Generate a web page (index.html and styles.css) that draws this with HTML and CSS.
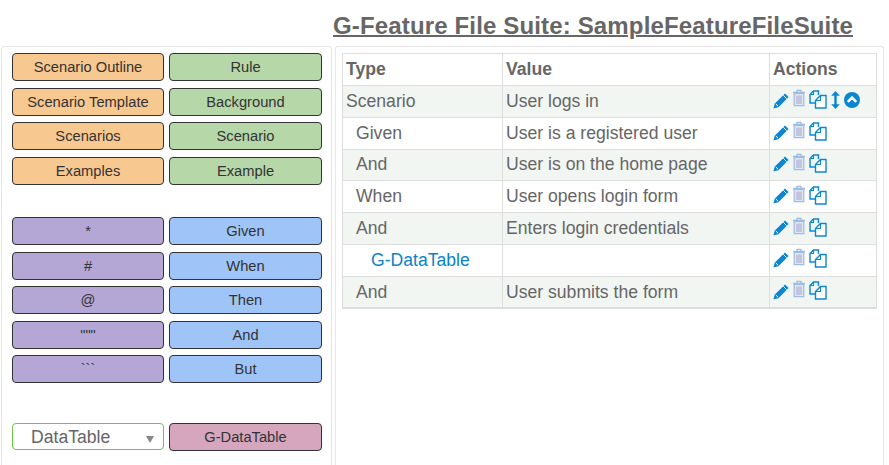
FILE: index.html

```html
<!DOCTYPE html>
<html lang="en">
<head>
  <meta charset="UTF-8">
  <meta name="viewport" content="width=device-width, initial-scale=1.0" />
  <title>G-Feature File Suite</title>
  <link rel="stylesheet" href="styles.css">
</head>
<body>
  <svg class="icon-defs" width="0" height="0">
    <symbol id="i-pencil" viewBox="0 0 16 16">
      <path d="M12 .4 15.6 4 5.4 14.2 .4 15.6 1.8 10.6Z" fill="currentColor"/>
      <path d="M10.3 2.3 13.7 5.7" stroke="#fff" stroke-width=".9"/>
      <path d="M2.8 11 5 13.2" stroke="#fff" stroke-width="1"/>
    </symbol>
    <symbol id="i-trash" viewBox="0 0 14 18">
      <path d="M1 3.5H13M5 3.3V1.3H9V3.3" fill="none" stroke="#9dbbe3" stroke-width="1.3"/>
      <path d="M2.2 4.5H11.8V16.6H2.2Z" fill="#dfe7f3" stroke="#9dbbe3" stroke-width="1.2"/>
      <path d="M5 6.5V15M7 6.5V15M9 6.5V15" stroke="#a9a2c4" stroke-width="1"/>
    </symbol>
    <symbol id="i-copy" viewBox="0 0 18 19">
      <path d="M9.5 5V1H4.5L1 4.5V13H6.5" fill="none" stroke="currentColor" stroke-width="1.4"/>
      <path d="M11.5 5.5H17V18H6.5V10.5Z" fill="#fff" stroke="currentColor" stroke-width="1.4"/>
      <path d="M4.5 1V4.5H1M11.5 5.5V10.5H6.5" fill="none" stroke="currentColor" stroke-width="1.1"/>
    </symbol>
    <symbol id="i-resize" viewBox="0 0 9 18">
      <path d="M4.5 0 8.8 4.8H5.7V13.2H8.8L4.5 18 .2 13.2H3.3V4.8H.2Z" fill="currentColor"/>
    </symbol>
    <symbol id="i-collapse" viewBox="0 0 16 16">
      <circle cx="8" cy="8" r="8" fill="currentColor"/>
      <path d="M3.8 9.9 8 5.7 12.2 9.9" fill="none" stroke="#fff" stroke-width="2.6"/>
    </symbol>
  </svg>

  <h1 class="title">G-Feature File Suite: SampleFeatureFileSuite</h1>

  <div class="workspace">
    <div class="panel palette">
      <div class="btn-grid">
        <button class="kw orange">Scenario Outline</button>
        <button class="kw green">Rule</button>
        <button class="kw orange">Scenario Template</button>
        <button class="kw green">Background</button>
        <button class="kw orange">Scenarios</button>
        <button class="kw green">Scenario</button>
        <button class="kw orange">Examples</button>
        <button class="kw green">Example</button>
      </div>
      <div class="btn-grid steps">
        <button class="kw purple">*</button>
        <button class="kw blue">Given</button>
        <button class="kw purple">#</button>
        <button class="kw blue">When</button>
        <button class="kw purple">@</button>
        <button class="kw blue">Then</button>
        <button class="kw purple">"""</button>
        <button class="kw blue">And</button>
        <button class="kw purple">```</button>
        <button class="kw blue">But</button>
      </div>
      <div class="btn-grid tables">
        <div class="fake-select">DataTable<span class="caret"></span></div>
        <button class="kw pink">G-DataTable</button>
      </div>
    </div>

    <div class="panel content">
      <table class="steps-table">
        <thead>
          <tr><th class="col-type">Type</th><th class="col-value">Value</th><th>Actions</th></tr>
        </thead>
        <tbody>
          <tr class="odd">
            <td>Scenario</td><td>User logs in</td>
            <td class="actions">
              <svg class="ic pencil"><use href="#i-pencil"/></svg><svg class="ic trash"><use href="#i-trash"/></svg><svg class="ic copy"><use href="#i-copy"/></svg><svg class="ic resize"><use href="#i-resize"/></svg><svg class="ic collapse"><use href="#i-collapse"/></svg>
            </td>
          </tr>
          <tr>
            <td class="lvl1">Given</td><td>User is a registered user</td>
            <td class="actions"><svg class="ic pencil"><use href="#i-pencil"/></svg><svg class="ic trash"><use href="#i-trash"/></svg><svg class="ic copy"><use href="#i-copy"/></svg></td>
          </tr>
          <tr class="odd">
            <td class="lvl1">And</td><td>User is on the home page</td>
            <td class="actions"><svg class="ic pencil"><use href="#i-pencil"/></svg><svg class="ic trash"><use href="#i-trash"/></svg><svg class="ic copy"><use href="#i-copy"/></svg></td>
          </tr>
          <tr>
            <td class="lvl1">When</td><td>User opens login form</td>
            <td class="actions"><svg class="ic pencil"><use href="#i-pencil"/></svg><svg class="ic trash"><use href="#i-trash"/></svg><svg class="ic copy"><use href="#i-copy"/></svg></td>
          </tr>
          <tr class="odd">
            <td class="lvl1">And</td><td>Enters login credentials</td>
            <td class="actions"><svg class="ic pencil"><use href="#i-pencil"/></svg><svg class="ic trash"><use href="#i-trash"/></svg><svg class="ic copy"><use href="#i-copy"/></svg></td>
          </tr>
          <tr>
            <td class="lvl2"><a class="link" href="#">G-DataTable</a></td><td></td>
            <td class="actions"><svg class="ic pencil"><use href="#i-pencil"/></svg><svg class="ic trash"><use href="#i-trash"/></svg><svg class="ic copy"><use href="#i-copy"/></svg></td>
          </tr>
          <tr class="odd">
            <td class="lvl1">And</td><td>User submits the form</td>
            <td class="actions"><svg class="ic pencil"><use href="#i-pencil"/></svg><svg class="ic trash"><use href="#i-trash"/></svg><svg class="ic copy"><use href="#i-copy"/></svg></td>
          </tr>
        </tbody>
      </table>
    </div>
  </div>
</body>
</html>
```

FILE: styles.css

```css
:root {
  font-family: "Liberation Sans", Arial, sans-serif;
  --line: #dddddd;
  --text: #666666;
  --accent: #0b82c9;
}
html, body {
  height: 465px;
  overflow: hidden;
}
body {
  margin: 0;
  background: #fff;
  color: var(--text);
  display: flex;
  flex-direction: column;
}
.icon-defs {
  position: absolute;
}
.title {
  margin: 0;
  height: 46px;
  box-sizing: border-box;
  padding: 12px 0 0 333px;
  font-size: 24px;
  letter-spacing: .15px;
  line-height: 27px;
  font-weight: bold;
  text-decoration: underline;
  text-decoration-thickness: 2px;
  white-space: nowrap;
}
.workspace {
  flex: 1;
  display: flex;
  gap: 3px;
  padding: 0 5px 0 1px;
}
.panel {
  box-sizing: border-box;
  border: 1px solid #e6e6e6;
  border-bottom: none;
  border-radius: 3px 3px 0 0;
}
.palette {
  width: 331px;
  padding: 6px 9px 0 10px;
}
.content {
  width: 550px;
  padding: 6px 6px 0 6px;
}
.btn-grid {
  display: grid;
  grid-template-columns: 152px 153px;
  column-gap: 5px;
  row-gap: 6.67px;
}
.steps {
  margin-top: 32px;
  row-gap: 6.6px;
}
.tables {
  margin-top: 40px;
}
.kw {
  height: 28px;
  padding: 0;
  border: 1px solid #333;
  border-radius: 4px;
  font: 14.7px "Liberation Sans", Arial, sans-serif;
  color: #333;
}
.orange { background: #f8c891; }
.green { background: #b6d7a8; }
.purple { background: #b4a7d6; }
.blue { background: #9fc5f8; }
.pink { background: #d5a6bd; }
.fake-select {
  box-sizing: border-box;
  height: 27px;
  padding-left: 18px;
  border: 1px solid #6cc644;
  border-radius: 4px;
  font-size: 17.6px;
  line-height: 26px;
  display: flex;
  justify-content: space-between;
}
.caret {
  width: 0;
  height: 0;
  margin: 12px 9px 0 0;
  border-left: 4px solid transparent;
  border-right: 4px solid transparent;
  border-top: 7px solid #888;
}
.steps-table {
  width: 535px;
  table-layout: fixed;
  border-collapse: collapse;
  font-size: 17.6px;
  border-bottom: 2px solid var(--line);
}
.col-type { width: 160px; }
.col-value { width: 267px; }
.steps-table th, .steps-table td {
  box-sizing: border-box;
  height: 31.85px;
  padding: 0 3px;
  border: 1px solid var(--line);
  text-align: left;
  white-space: nowrap;
}
.steps-table thead th {
  font-weight: bold;
}
.odd td {
  background: #f2f6f3;
}
.steps-table .lvl1 { padding-left: 13px; }
.steps-table .lvl2 { padding-left: 28px; }
.link {
  color: var(--accent);
  text-decoration: none;
}
.steps-table .actions {
  line-height: 0;
  padding-bottom: 2px;
}
.ic {
  display: inline-block;
  vertical-align: middle;
  color: #0c86d3;
}
.pencil { width: 16px; height: 16px; margin-top: 1px; }
.trash { width: 14px; height: 18px; margin: -4px 0 0 3px; }
.copy { width: 18px; height: 19px; margin: -1px 0 0 3px; }
.resize { width: 9px; height: 18px; margin-left: 4px; }
.collapse { width: 16px; height: 16px; margin: -1px 0 0 4px; }
```
